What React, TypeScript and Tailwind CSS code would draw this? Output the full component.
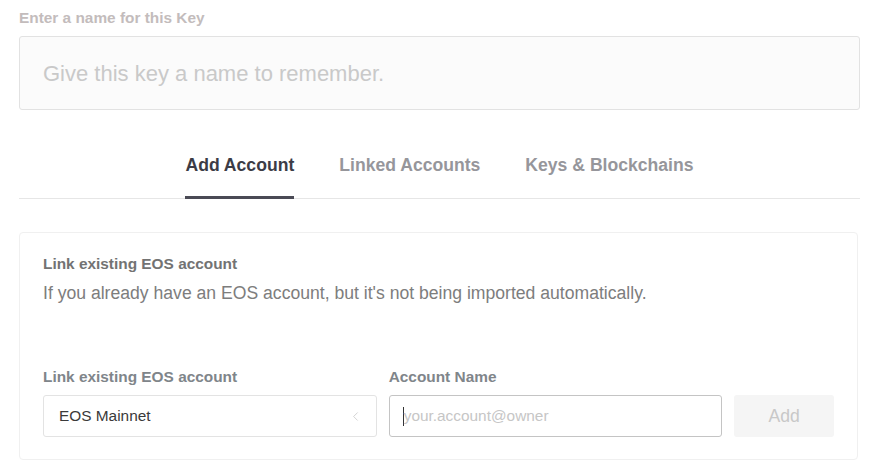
import { ChevronLeft } from "lucide-react";

const TABS = ["Add Account", "Linked Accounts", "Keys & Blockchains"];

export default function App() {
  return (
    <div className="w-[876px] h-[473px] bg-white pl-[19px] pr-[16px] pt-[9px] font-[family-name:'Liberation_Sans',Arial,sans-serif] overflow-hidden">
      {/* key name */}
      <div className="text-[15.4px] font-bold text-[#c3bcbc] leading-[18px]">Enter a name for this Key</div>
      <div className="mt-[9px] h-[74px] rounded-[3px] border border-[#e2e2e2] bg-[#fbfbfb] flex items-center pl-[23px]">
        <span className="text-[22px] text-[#c9c9c9]">Give this key a name to remember.</span>
      </div>

      {/* tabs */}
      <div className="mt-[44px] flex justify-center gap-[45px] border-b border-[#e6e6e6]">
        {TABS.map((t, i) => (
          <div
            key={t}
            className={
              i === 0
                ? "pb-[20px] text-[17.6px] font-bold leading-[22px] text-[#3c3c46] border-b-[3px] border-[#4a4a55] -mb-px"
                : "pb-[20px] text-[17.6px] font-bold leading-[22px] text-[#96969b] border-b-[3px] border-transparent -mb-px"
            }
          >
            {t}
          </div>
        ))}
      </div>

      {/* card */}
      <div className="mt-[33px] w-[839px] h-[228px] rounded-[4px] border border-[#f0f0f0] px-[23px] pt-[22px]">
        <div className="text-[15.4px] font-bold text-[#737373] leading-[18px]">Link existing EOS account</div>
        <div className="mt-[9px] text-[17.6px] text-[#7d7d7d] leading-[22px]">
          If you already have an EOS account, but it's not being imported automatically.
        </div>

        <div className="mt-[64px] flex gap-[12px]">
          <div className="w-[335px]">
            <div className="text-[15.4px] font-bold text-[#80858a] leading-[18px]">Link existing EOS account</div>
            <div className="mt-[9px] h-[42px] rounded-[3px] border border-[#e3e3e3] flex items-center justify-between pl-[15px] pr-[13px]">
              <span className="text-[15.4px] text-[#3a3a3a]">EOS Mainnet</span>
              <ChevronLeft size={15} strokeWidth={1.2} className="text-[#c4c4c4]" />
            </div>
          </div>
          <div className="w-[335px]">
            <div className="text-[15.4px] font-bold text-[#80858a] leading-[18px]">Account Name</div>
            <div className="mt-[9px] h-[42px] rounded-[3px] border border-[#c4c4c4] flex items-center pl-[13px]">
              <span className="w-px h-[19px] bg-[#333]" />
              <span className="text-[15.4px] text-[#c6c6c6]">your.account@owner</span>
            </div>
          </div>
          <div className="w-[100px] pt-[27px]">
            <button className="w-full h-[42px] rounded-[3px] bg-[#f5f5f5] text-[17.6px] text-[#c8c8c8]">Add</button>
          </div>
        </div>
      </div>
    </div>
  );
}
